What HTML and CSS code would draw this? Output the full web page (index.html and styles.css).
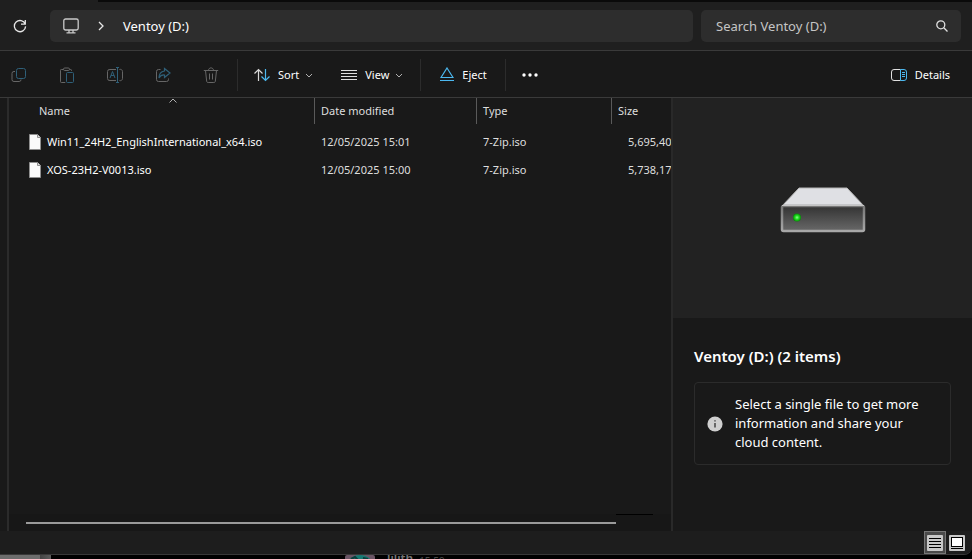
FILE: index.html
```html
<!DOCTYPE html>
<html lang="en">
<head>
<meta charset="utf-8">
<title>Ventoy (D:)</title>
<link rel="stylesheet" href="styles.css">
</head>
<body>
<div class="window">
  <header class="address-row">
    <button class="icon-btn refresh" aria-label="Refresh">
      <svg width="14" height="14" viewBox="0 0 14 14" fill="none" stroke="#e6e6e6" stroke-width="1.3"><path d="M12.2 5A5.6 5.6 0 1 0 12.6 7.4M12.3 1v4.2H8"/></svg>
    </button>
    <nav class="breadcrumb" aria-label="Address">
      <svg class="crumb-pc" width="16" height="16" viewBox="0 0 16 16" fill="none" stroke="#c9c9c9" stroke-width="1.3"><rect x=".8" y="1" width="14.4" height="11" rx="1.8"/><path d="M6 12v2.6M10 12v2.6M3.5 14.8h9"/></svg>
      <svg class="crumb-arrow" width="6" height="10" viewBox="0 0 6 10" fill="none" stroke="#e6e6e6" stroke-width="1.3"><path d="M1 1l4 4-4 4"/></svg>
      <a href="#">Ventoy (D:)</a>
    </nav>
    <label class="search">
      <input type="search" placeholder="Search Ventoy (D:)" aria-label="Search Ventoy (D:)">
      <svg width="12" height="12" viewBox="0 0 12 12" fill="none" stroke="#e0e0e0" stroke-width="1.3"><circle cx="4.8" cy="4.8" r="4"/><path d="M7.8 7.8l3.7 3.7"/></svg>
    </label>
  </header>

  <div class="toolbar" role="toolbar" aria-label="Commands">
    <div class="edit-group">
      <button class="icon-btn" aria-label="Copy" disabled>
        <svg width="16" height="16" viewBox="0 0 16 16" fill="none"><path d="M4 4.5H3A1.9 1.9 0 0 0 1 6.4v6.2a1.9 1.9 0 0 0 2 1.9h5.2a1.9 1.9 0 0 0 1.8-2" stroke="#666"/><rect x="5.5" y="1.500" width="9" height="10" rx="2" stroke="#2f6079"/></svg>
      </button>
      <button class="icon-btn" aria-label="Paste" disabled>
        <svg width="16" height="17" viewBox="0 0 16 17" fill="none"><path d="M4.500 2.500H2.300a.8.8 0 0 0-.8.800v11.400c0 .5.300.8.800.8h4M10.500 2.500H11.700c.5 0 .8.300.8.800V4" stroke="#666"/><rect x="4.500" y="1" width="6" height="2.500" rx="1.200" stroke="#666"/><rect x="7.500" y="5.500" width="7" height="10" rx="1" stroke="#2f6079"/></svg>
      </button>
      <button class="icon-btn" aria-label="Rename" disabled>
        <svg width="16" height="16" viewBox="0 0 16 16" fill="none"><path d="M9 2.500H3A2.200 2.200 0 0 0 .5 4.700v6.600A2.200 2.200 0 0 0 3 13.500h6M12.500 2.500a2.200 2.200 0 0 1 3 2.200v6.600a2.200 2.200 0 0 1-3 2.200" stroke="#666"/><path d="M3 11l2.500-6.500L8 11M4 8.500h3.200M10.500 1v14M9 .5h3M9 15.500h3" stroke="#2f6079"/></svg>
      </button>
      <button class="icon-btn" aria-label="Share" disabled>
        <svg width="16" height="16" viewBox="0 0 16 16" fill="none"><path d="M5.500 2.500H3.500a2 2 0 0 0-2 2v8a2 2 0 0 0 2 2h8a2 2 0 0 0 2-2v-1" stroke="#666"/><path d="M9.500 1.500L15 6l-5.500 4.500V8C7 7.800 5 9 4 11c0-4 2-6.500 5.500-7z" stroke="#2f6079" stroke-width="1.200"/></svg>
      </button>
      <button class="icon-btn" aria-label="Delete" disabled>
        <svg width="16" height="17" viewBox="0 0 16 17" fill="none" stroke="#666"><path d="M.8 3.500h14.400M5.500 3.500c0-3.500 5-3.500 5 0M2.500 3.500l1.200 11a1.500 1.500 0 0 0 1.500 1h5.600a1.500 1.500 0 0 0 1.500-1L13.500 3.500M6.500 6.500v6M9.500 6.500v6"/></svg>
      </button>
    </div>
    <div class="view-group">
      <button class="cmd"><svg width="16" height="14" viewBox="0 0 16 14" fill="none" stroke-width="1.200"><path d="M4.500 13V1.500M.5 5.500l4-4 4 4" stroke="#d8d8d8"/><path d="M11.500 1v11.500M7.500 8.500l4 4 4-4" stroke="#4cb8ef"/></svg><span>Sort</span><svg class="chev" width="8" height="5" viewBox="0 0 8 5" fill="none" stroke="#b0b0b0"><path d="M1 1l3 3 3-3"/></svg></button>
      <button class="cmd"><svg width="16" height="12" viewBox="0 0 16 12" stroke="#e0e0e0"><path d="M0 1.500h16M0 4.500h16M0 7.500h16M0 10.500h16"/></svg><span>View</span><svg class="chev" width="8" height="5" viewBox="0 0 8 5" fill="none" stroke="#b0b0b0"><path d="M1 1l3 3 3-3"/></svg></button>
    </div>
    <div class="eject-group">
      <button class="cmd"><svg width="14" height="16" viewBox="0 0 14 16" fill="none" stroke="#4cb8ef" stroke-width="1.200"><path d="M7 1L13 10.500H1zM0 13.500h14"/></svg><span>Eject</span></button>
    </div>
    <button class="icon-btn more" aria-label="See more"><svg width="16" height="4" viewBox="0 0 16 4" fill="#fff"><circle cx="2" cy="2" r="1.700"/><circle cx="8" cy="2" r="1.700"/><circle cx="14" cy="2" r="1.700"/></svg></button>
    <button class="cmd details-btn"><svg width="16" height="12" viewBox="0 0 16 12" fill="none"><path d="M9.500.5H3A2.500 2.500 0 0 0 .5 3v6A2.500 2.500 0 0 0 3 11.500h6.500" stroke="#e0e0e0"/><path d="M9.500.5H13A2.500 2.500 0 0 1 15.500 3v6a2.500 2.500 0 0 1-2.500 2.500H9.500zM11 3.500h3M11 5.500h3M11 7.500h3" stroke="#4cb8ef"/></svg><span>Details</span></button>
  </div>

  <div class="content">
    <div class="nav-edge"></div>
    <main class="files">
      <table>
        <colgroup><col class="c-name"><col class="c-date"><col class="c-type"><col></colgroup>
        <thead><tr>
          <th class="sorted">Name<svg width="8" height="5" viewBox="0 0 8 5" fill="none" stroke="#b0b0b0"><path d="M.5 4.500L4 1l3.500 3.500"/></svg></th>
          <th>Date modified</th><th>Type</th><th>Size</th>
        </tr></thead>
        <tbody>
          <tr><td class="name"><span><svg width="12" height="16" viewBox="0 0 12 16"><path d="M.5.5h8l3 3v12H.5z" fill="#fafafa" stroke="#8f8f8f"/><path d="M8.500.5v3h3" fill="#ddd" stroke="#8f8f8f"/></svg>Win11_24H2_EnglishInternational_x64.iso</span></td><td>12/05/2025 15:01</td><td>7-Zip.iso</td><td class="size">5,695,40</td></tr>
          <tr><td class="name"><span><svg width="12" height="16" viewBox="0 0 12 16"><path d="M.5.5h8l3 3v12H.5z" fill="#fafafa" stroke="#8f8f8f"/><path d="M8.500.5v3h3" fill="#ddd" stroke="#8f8f8f"/></svg>XOS-23H2-V0013.iso</span></td><td>12/05/2025 15:00</td><td>7-Zip.iso</td><td class="size">5,738,17</td></tr>
        </tbody>
      </table>
      <div class="scrollbar"><div class="thumb"></div><div class="track-mark"></div></div>
    </main>
    <aside class="details">
      <div class="preview">
        <svg width="86" height="46" viewBox="0 0 86 46">
          <defs>
            <linearGradient id="face" x1="0" y1="0" x2="0" y2="1"><stop offset="0" stop-color="#333"/><stop offset="1" stop-color="#686868"/></linearGradient>
            <linearGradient id="rim" x1="0" y1="0" x2="0" y2="1"><stop offset="0" stop-color="#777"/><stop offset="1" stop-color="#a8a8a8"/></linearGradient>
            <radialGradient id="led"><stop offset="0" stop-color="#8dff8d"/><stop offset=".5" stop-color="#20dd20"/><stop offset="1" stop-color="#078a07"/></radialGradient>
          </defs>
          <path d="M19 1h48l17 18H2z" fill="#dfe0e4" stroke="#b5b5b5"/>
          <rect x="2" y="19" width="82" height="25" rx="1.500" fill="url(#face)" stroke="url(#rim)" stroke-width="2.500"/>
          <path d="M2 18.500h82" stroke="#c4c4c4"/>
          <circle cx="17" cy="30.500" r="4" fill="url(#led)"/>
        </svg>
      </div>
      <div class="info">
        <h2>Ventoy (D:) (2 items)</h2>
        <div class="note">
          <svg width="16" height="16" viewBox="0 0 16 16"><circle cx="8" cy="8" r="7.600" fill="#cfcfcf"/><path d="M8 7v4.500M8 4.200v1.400" stroke="#222" stroke-width="1.200"/></svg>
          <p>Select a single file to get more information and share your cloud content.</p>
        </div>
      </div>
    </aside>
  </div>

  <footer class="status">
    <button class="mode active" aria-label="Details view"><svg width="16" height="16" viewBox="0 0 16 16"><rect width="16" height="16" rx="1" fill="#c8c8c8"/><path d="M2 3.500h12M2 6.500h12M2 9.500h12M2 12.500h12" stroke="#000"/></svg></button>
    <button class="mode" aria-label="Large icons view"><svg width="16" height="16" viewBox="0 0 16 16"><rect width="16" height="16" rx="1" fill="#c8c8c8"/><rect x="2.500" y="2.500" width="11" height="9" fill="#fff" stroke="#000"/><path d="M2 13.500h12" stroke="#000"/></svg></button>
  </footer>
</div>
<div class="behind">
  <div class="behind-block"></div>
  <svg class="avatar" width="30" height="30" viewBox="0 0 30 30"><rect width="30" height="30" rx="2" fill="#6a5565"/><circle cx="15" cy="15" r="15" fill="#157a72"/><path d="M6 4l4-2 3 3M18 3l5 1" stroke="#0b3b3a" stroke-width="2" fill="none"/></svg>
  <span class="who">lilith</span><span class="when">15:59</span>
</div>
</body>
</html>
```
FILE: styles.css
```css
* { box-sizing: border-box; }
body {
  margin: 0;
  min-height: 100vh;
  display: flex;
  flex-direction: column;
  overflow: hidden;
  background: #000;
  color: #fff;
  font: 11px/16px "Noto Sans", "Open Sans", sans-serif;
}
button { border: 0; padding: 0; background: none; color: inherit; font: inherit; }
svg { display: block; flex: none; }

.window {
  flex: 1;
  display: flex;
  flex-direction: column;
  background: #191919;
  border-bottom: 1px solid #383838;
  border-bottom-right-radius: 8px;
}

.address-row {
  display: flex;
  align-items: center;
  height: 51px;
  padding: 2px 11px 0 0;
  gap: 8px;
  background: linear-gradient(#0a0a0a, #0a0a0a) 98px 0 / 100% 2px no-repeat #1f1f1f;
  border-bottom: 1px solid #3a3a3a;
}
.icon-btn { display: grid; place-items: center; }
.refresh { width: 42px; height: 32px; }
.refresh svg { margin-left: -2px; }
.breadcrumb, .search {
  display: flex;
  align-items: center;
  height: 32px;
  border-radius: 5px;
  background: #2d2d2d;
  font-size: 13px;
}
.breadcrumb { flex: 1; padding-left: 13px; }
.breadcrumb a { color: #fff; text-decoration: none; }
.crumb-arrow { margin: 0 19px; }
.search { width: 260px; padding: 0 13px 0 15px; }
.search input {
  flex: 1;
  min-width: 0;
  padding: 0;
  border: 0;
  outline: 0;
  background: none;
  color: #fff;
  font: inherit;
}
.search input::placeholder { color: #c5c5c5; opacity: 1; }

.toolbar {
  display: flex;
  align-items: center;
  height: 47px;
  padding: 2px 22px 0 0;
  border-bottom: 1px solid #3a3a3a;
}
.toolbar > div { display: flex; align-items: center; height: 32px; border-right: 1px solid #2c2c2c; }
.edit-group { gap: 32px; padding: 0 18px 0 11px; }
.view-group { gap: 28px; padding: 0 17px 0 16px; }
.eject-group { padding: 0 18px 0 19px; }
.cmd { display: flex; align-items: center; gap: 8px; }
.cmd .chev { margin-left: -2px; }
.more { width: 48px; height: 32px; }
.details-btn { margin-left: auto; }

.content { flex: 1; display: flex; min-height: 0; }
.nav-edge { width: 9px; border-right: 2px solid #2b2b2b; }
.files { flex: 1; min-width: 0; display: flex; flex-direction: column; overflow: hidden; }
table {
  width: calc(100% - 18px);
  margin-left: 18px;
  table-layout: fixed;
  border-collapse: separate;
  border-spacing: 0;
}
.c-name { width: 288px; }
.c-date { width: 162px; }
.c-type { width: 135px; }
th, td { padding: 0 0 0 6px; text-align: left; font-weight: 400; white-space: nowrap; color: #dedede; }
th { height: 26px; border-right: 1px solid #5a5a5a; }
th:last-child { border-right: 0; }
.sorted { position: relative; padding-left: 12px; }
.sorted svg { position: absolute; top: 0; left: calc(50% - 2px); }
tbody::before { content: ""; display: block; height: 4px; }
td { height: 28px; overflow: hidden; }
.name { padding-left: 2px; color: #fff; }
.name span { display: flex; align-items: center; gap: 6px; }
.size { padding-left: 16px; }
.scrollbar {
  display: flex;
  align-items: center;
  margin-top: auto;
  height: 17px;
  padding: 0 18px 0 17px;
  background: #171717;
}
.thumb { flex: 1; height: 2px; background: #9a9a9a; }
.track-mark { width: 37px; height: 1px; align-self: flex-start; background: #000; }

.details { width: 301px; border-left: 2px solid #292929; }
.preview { display: grid; place-items: center; height: 220px; background: #222; padding: 4px 0 0 0; }
.info { padding: 26px 21px 0 21px; }
h2 { margin: 0; font-size: 15px; line-height: 24px; font-weight: 600; }
.note {
  display: flex;
  align-items: center;
  gap: 12px;
  margin-top: 14px;
  padding: 12px;
  border: 1px solid #2b2b2b;
  border-radius: 4px;
}
.note p { margin: 0; font-size: 13px; line-height: 19px; }

.status { display: flex; justify-content: flex-end; height: 23px; padding-right: 4px; background: #1d1d1d; border-bottom-right-radius: 8px; }
.mode { display: grid; place-items: center; width: 22px; height: 23px; border: 1px solid transparent; }
.active { background: #4a4a4a; border-color: #777; }

.behind { display: flex; height: 4px; overflow: hidden; background: #000; color: #777; }
.behind-block { width: 51px; flex: none; background: linear-gradient(90deg, #6d6d6d 40px, #444 40px, #5c5c5c); }
.avatar { margin-left: 294px; }
.who { margin-left: 12px; font-size: 12px; font-weight: 600; line-height: 8px; }
.when { margin-left: 6px; font-size: 10px; line-height: 12px; color: #4a4a4a; }
```
